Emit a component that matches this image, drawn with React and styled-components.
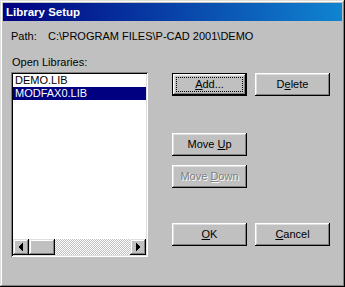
import React from "react";
import styled, { createGlobalStyle } from "styled-components";

const Global = createGlobalStyle`
  html, body { margin: 0; padding: 0; background: #c0c0c0; overflow: hidden; }
  * { box-sizing: border-box; }
`;

const Window = styled.div`
  width: 345px;
  height: 287px;
  background: #c0c0c0;
  padding: 3px;
  box-shadow: inset -1px -1px #000, inset 1px 1px #dfdfdf, inset -2px -2px #808080, inset 2px 2px #fff;
  font-family: "Liberation Sans", Arial, sans-serif;
  font-size: 11px;
  line-height: 13px;
  color: #000;
  display: flex;
  flex-direction: column;
`;

const TitleBar = styled.div`
  height: 18px;
  background: linear-gradient(to right, #000080, #1084d0);
  color: #fff;
  font-weight: bold;
  font-size: 11.5px;
  line-height: 18px;
  padding-left: 3px;
`;

const Content = styled.div`
  padding-left: 8px;
  display: flex;
  flex-direction: column;
`;

const PathRow = styled.div`
  margin-top: 9px;
  height: 13px;
  display: flex;
  white-space: nowrap;
`;

const PathLabel = styled.span`
  width: 37px;
`;

const Main = styled.div`
  margin-top: 13px;
  display: flex;
  gap: 24px;
`;

const ListColumn = styled.div`
  width: 137px;
  display: flex;
  flex-direction: column;
`;

const Label = styled.div`
  height: 13px;
  padding-left: 1px;
`;

const ListBox = styled.div`
  margin-top: 3px;
  height: 185px;
  background: #fff;
  padding: 2px;
  box-shadow: inset 1px 1px #808080, inset -1px -1px #fff, inset 2px 2px #000, inset -2px -2px #dfdfdf;
  display: flex;
  flex-direction: column;
`;

const Items = styled.div`
  flex: 1;
`;

const Item = styled.div`
  height: 13px;
  padding-left: 2px;
  white-space: nowrap;
  background: ${(p) => (p.$selected ? "#000080" : "transparent")};
  color: ${(p) => (p.$selected ? "#fff" : "#000")};
`;

const ScrollBar = styled.div`
  height: 16px;
  display: flex;
`;

const raised = `
  background: #c0c0c0;
  box-shadow: inset -1px -1px #000, inset 1px 1px #dfdfdf, inset -2px -2px #808080, inset 2px 2px #fff;
`;

const ScrollButton = styled.div`
  width: 16px;
  height: 16px;
  ${raised}
  display: flex;
  align-items: center;
  justify-content: center;
`;

const Thumb = styled.div`
  width: 26px;
  height: 16px;
  ${raised}
`;

const Track = styled.div`
  flex: 1;
  background-color: #fff;
  background-image: repeating-conic-gradient(#c0c0c0 0% 25%, #fff 0% 50%);
  background-size: 2px 2px;
`;

const ButtonColumn = styled.div`
  padding-top: 17px;
  display: flex;
  flex-direction: column;
`;

const ButtonRow = styled.div`
  display: flex;
  gap: 8px;
  margin-top: ${(p) => p.$mt || 0}px;
`;

const Button = styled.div`
  position: relative;
  width: 75px;
  height: 23px;
  display: flex;
  align-items: center;
  justify-content: center;
  background: #c0c0c0;
  color: ${(p) => (p.$disabled ? "#808080" : "#000")};
  text-shadow: ${(p) => (p.$disabled ? "1px 1px 0 #fff" : "none")};
  box-shadow: ${(p) =>
    p.$default
      ? "inset 0 0 0 1px #000, inset -2px -2px #000, inset 2px 2px #fff, inset -3px -3px #808080, inset 3px 3px #dfdfdf"
      : "inset -1px -1px #000, inset 1px 1px #fff, inset -2px -2px #808080, inset 2px 2px #dfdfdf"};
  u { text-decoration: underline; text-underline-offset: 1px; }
`;

const FocusRing = styled.span`
  position: absolute;
  inset: 4px;
  border: 1px dotted #000;
  pointer-events: none;
`;

const Arrow = ({ dir }) => (
  <svg width="16" height="16" viewBox="0 0 16 16" shapeRendering="crispEdges">
    {dir === "left" ? (
      <path d="M9 4h1v8h-1zM8 5h1v6h-1zM7 6h1v4h-1zM6 7h1v2h-1z" fill="#000" />
    ) : (
      <path d="M6 4h1v8h-1zM7 5h1v6h-1zM8 6h1v4h-1zM9 7h1v2h-1z" fill="#000" />
    )}
  </svg>
);

export default function App() {
  return (
    <>
      <Global />
      <Window>
        <TitleBar>Library Setup</TitleBar>
        <Content>
          <PathRow>
            <PathLabel>Path:</PathLabel>
            <span>C:\PROGRAM FILES\P-CAD 2001\DEMO</span>
          </PathRow>
          <Main>
            <ListColumn>
              <Label>Open Libraries:</Label>
              <ListBox>
                <Items>
                  <Item>DEMO.LIB</Item>
                  <Item $selected>MODFAX0.LIB</Item>
                </Items>
                <ScrollBar>
                  <ScrollButton><Arrow dir="left" /></ScrollButton>
                  <Thumb />
                  <Track />
                  <ScrollButton><Arrow dir="right" /></ScrollButton>
                </ScrollBar>
              </ListBox>
            </ListColumn>
            <ButtonColumn>
              <ButtonRow>
                <Button $default>
                  <FocusRing />
                  <span><u>A</u>dd...</span>
                </Button>
                <Button><span>D<u>e</u>lete</span></Button>
              </ButtonRow>
              <ButtonRow $mt={37}>
                <Button><span>Move <u>U</u>p</span></Button>
              </ButtonRow>
              <ButtonRow $mt={9}>
                <Button $disabled><span>Move <u>D</u>own</span></Button>
              </ButtonRow>
              <ButtonRow $mt={35}>
                <Button><span><u>O</u>K</span></Button>
                <Button><span><u>C</u>ancel</span></Button>
              </ButtonRow>
            </ButtonColumn>
          </Main>
        </Content>
      </Window>
    </>
  );
}
